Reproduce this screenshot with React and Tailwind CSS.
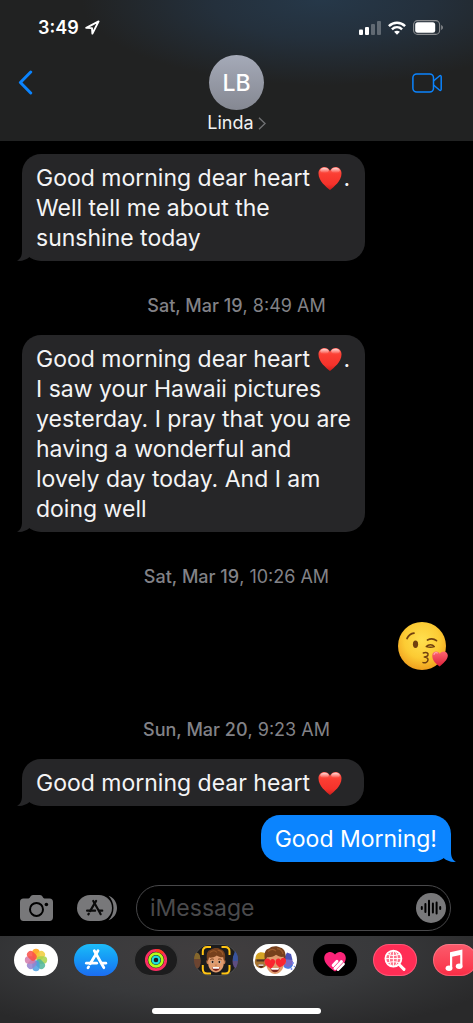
import React, { useState } from 'react';

const HEART_PATH = 'M12 24C8.2 20.6 .5 15 .5 7.4C.5 3.6 3.2 1 6.4 1C8.9 1 11 2.4 12 4.8C13 2.4 15.1 1 17.6 1C20.8 1 23.5 3.6 23.5 7.4C23.5 15 15.8 20.6 12 24Z';

function Heart({ closing }) {
  return (
    <svg role="img" aria-label="red heart" viewBox="0 0 24 25"
         className={`ml-px inline-block h-[25px] w-6 align-[-5px] ${closing ? 'mr-2.5' : 'mr-0.5'}`}>
      <defs>
        <linearGradient id="heart" x1="0" y1="0" x2="0" y2="1">
          <stop offset="0" stopColor="#ff6a60"/>
          <stop offset=".3" stopColor="#fb3e33"/>
          <stop offset=".75" stopColor="#f5322b"/>
          <stop offset="1" stopColor="#c91f1c"/>
        </linearGradient>
        <linearGradient id="shine" x1="0" y1="0" x2="0" y2="1">
          <stop offset="0" stopColor="#fff" stopOpacity=".75"/>
          <stop offset="1" stopColor="#fff" stopOpacity="0"/>
        </linearGradient>
      </defs>
      <path d={HEART_PATH} fill="url(#heart)"/>
      <ellipse cx="6.5" cy="4.3" rx="4.2" ry="2.6" fill="url(#shine)"/>
      <ellipse cx="17.5" cy="4.3" rx="4.2" ry="2.6" fill="url(#shine)"/>
    </svg>
  );
}

function KissEmoji() {
  return (
    <svg role="img" aria-label="face blowing a kiss" viewBox="0 0 50 48" className="h-12 w-[50px]">
      <defs>
        <radialGradient id="face" cx=".5" cy=".38" r=".62">
          <stop offset="0" stopColor="#ffe04f"/>
          <stop offset=".6" stopColor="#fccb34"/>
          <stop offset="1" stopColor="#f0a01e"/>
        </radialGradient>
        <linearGradient id="kiss" x1="0" y1="0" x2="0" y2="1">
          <stop offset="0" stopColor="#ff6672"/>
          <stop offset="1" stopColor="#dc2038"/>
        </linearGradient>
      </defs>
      <circle cx="24" cy="24" r="24" fill="url(#face)"/>
      <g fill="none" stroke="#71400f" strokeLinecap="round" strokeLinejoin="round">
        <path d="M9 16.5C10.5 13.5 13 11.6 16 11.2" strokeWidth="1.7"/>
        <path d="M29.5 18C32.5 16.3 36 16.6 38.5 18.6" strokeWidth="1.7"/>
        <path d="M28.3 24.6C30.5 22 34.5 22 36.3 24.6C34 25.4 31 25.4 28.3 24.6Z" strokeWidth="1.5"/>
        <path d="M25.3 31C28 29.8 30.6 31 30 33C29.6 34.3 28 34.8 26.3 34.9C28.6 35.2 30.2 36.2 30 37.9C29.7 40.3 27.5 41.4 25 40.6" strokeWidth="1.5"/>
      </g>
      <ellipse cx="17.5" cy="22.3" rx="2.6" ry="3.7" fill="#71400f"/>
      <path d="M41.6 44.5C38.5 42 33.8 38.6 34.3 33C34.7 29.4 39.3 28 41.8 31.7C44.5 28 49.5 29.4 49.8 33.2C50 37.8 44.6 41.8 41.6 44.5Z" fill="url(#kiss)"/>
      <path d="M36 32.5C36.4 30.8 38 30.2 39.4 30.9" stroke="#ffa6ab" strokeWidth="1.1" strokeLinecap="round" fill="none"/>
    </svg>
  );
}

function Bubble({ mine, children }) {
  return (
    <div className={`relative max-w-[343px] rounded-[19px] pl-[14px] pt-[9px] pb-2 text-[23px] leading-[30px]
      ${mine ? 'self-end mr-[22px] pr-[14px] bg-[#0b84fe] text-white' : 'self-start ml-[22px] pr-3 bg-[#262628] text-[#f4f4f5]'}`}>
      <svg aria-hidden="true" viewBox="0 0 24 20"
           className={`absolute bottom-0 h-5 w-6 ${mine ? '-right-[5px] -scale-x-100 fill-[#0b84fe]' : '-left-[5px] fill-[#262628]'}`}>
        <path d="M5 0V10C5 15 3.6 17.8 0 19.8C5 20.4 9 18.8 12.5 16L24 19V0Z"/>
      </svg>
      <p className="relative">{children}</p>
    </div>
  );
}

function Stamp({ day, time }) {
  return (
    <div className="mt-[33px] mb-[17px] text-center text-lg leading-6 text-[#828287]">
      <span className="font-medium">{day}</span>, {time}
    </div>
  );
}

function StatusBar() {
  return (
    <div className="flex h-[55px] items-center justify-between pl-[38px] pr-[30px] text-white">
      <div className="flex items-center gap-[6px]">
        <span className="text-lg font-semibold">3:49</span>
        <svg viewBox="0 0 15 15" className="size-[15px]" fill="none" stroke="currentColor" strokeWidth="1.9" strokeLinejoin="round">
          <path d="M1.2 7.8L13.6 1.4L7.4 13.6L7 8.1Z"/>
        </svg>
      </div>
      <div className="flex items-center gap-[7px]">
        <svg viewBox="0 0 22 14" className="h-[14px] w-[22px]" fill="currentColor">
          <rect y="8.5" width="4" height="5.5" rx="1"/>
          <rect x="6" y="6" width="4" height="8" rx="1"/>
          <rect x="12" y="3" width="4" height="11" rx="1" opacity=".28"/>
          <rect x="18" width="4" height="14" rx="1" opacity=".28"/>
        </svg>
        <svg viewBox="0 0 18 14" className="h-[14px] w-[18px]" fill="none" stroke="currentColor" strokeWidth="2.5">
          <path d="M.9 5.1C5.6 .6 12.4 .6 17.1 5.1"/>
          <path d="M3.9 8.4C6.9 5.6 11.1 5.6 14.1 8.4"/>
          <path d="M9 13.7L6.1 10.8C7.8 9.4 10.2 9.4 11.9 10.8Z" fill="currentColor" stroke="none"/>
        </svg>
        <svg viewBox="0 0 30 15" className="h-[15px] w-[30px]">
          <rect x=".6" y=".6" width="26" height="13.8" rx="4" fill="none" stroke="#8b8d90" strokeWidth="1.1"/>
          <rect x="2.2" y="2.2" width="20" height="10.6" rx="2.5" fill="#fff"/>
          <path d="M28.2 5V10C29.3 9.5 29.9 8.6 29.9 7.5S29.3 5.5 28.2 5Z" fill="#8b8d90"/>
        </svg>
      </div>
    </div>
  );
}

function Header() {
  return (
    <header className="bg-[#212222] bg-[radial-gradient(ellipse_240px_85px_at_68%_0%,#263849_0%,#24303c_45%,transparent_100%)]">
      <StatusBar/>
      <nav className="grid grid-cols-3 items-start pb-[5px]">
        <button aria-label="Back" className="flex h-[55px] items-center justify-self-start pl-[18px] text-[#0b84fe]">
          <svg viewBox="0 0 15 25" className="h-[25px] w-[15px]" fill="none" stroke="currentColor" strokeWidth="3" strokeLinecap="round" strokeLinejoin="round">
            <path d="M12.7 2L2.4 12.5L12.7 23"/>
          </svg>
        </button>
        <button className="flex flex-col items-center justify-self-center">
          <span className="flex size-[55px] items-center justify-center rounded-full bg-linear-to-b from-[#a5aab8] to-[#858892] pt-0.5 text-[23px] font-medium text-white">LB</span>
          <span className="flex items-center gap-1 text-lg leading-[26px] text-[#f1f1f1]">
            Linda
            <svg viewBox="0 0 8 13" className="h-[13px] w-2" fill="none" stroke="#707173" strokeWidth="1.4">
              <path d="M1 .8L7 6.5L1 12.2"/>
            </svg>
          </span>
        </button>
        <button aria-label="Video call" className="flex h-[55px] items-center justify-self-end pr-[31px] text-[#0b84fe]">
          <svg viewBox="0 0 30 20" className="h-5 w-[30px]" fill="none" stroke="currentColor" strokeWidth="1.5" strokeLinejoin="round">
            <rect x=".9" y=".9" width="20.6" height="18.2" rx="3.8"/>
            <path d="M21.5 8L27.4 3C28.4 2.3 29.2 2.6 29.2 3.7V16.3C29.2 17.4 28.4 17.7 27.4 17L21.5 12"/>
          </svg>
        </button>
      </nav>
    </header>
  );
}

function AppStoreGlyph() {
  return (
    <g fill="none" stroke="currentColor" strokeWidth="2.8" strokeLinecap="round">
      <path d="M9.3 1.2L16.6 14.2L18.8 18.2"/>
      <path d="M13 1.2L5.2 14.2"/>
      <path d="M3.6 17.4L3 18.4"/>
      <path d="M1.4 13.7H11.7"/>
      <path d="M17.2 13.7H20.8"/>
    </g>
  );
}

function Composer() {
  const [text, setText] = useState('');
  return (
    <form className="mt-auto flex items-center pb-[5px] pl-5 pr-[22px] text-[#78787a]" onSubmit={e => e.preventDefault()}>
      <button type="button" aria-label="Camera" className="mr-6">
        <svg viewBox="0 0 33 26" className="h-[26px] w-[33px]">
          <path d="M3.5 3.5H8.5C10 3.5 10.5 0 13 0H20C22.5 0 23 3.5 24.5 3.5H29.5C31.8 3.5 33 4.8 33 7V22.3C33 24.7 31.8 26 29.5 26H3.5C1.2 26 0 24.7 0 22.3V7C0 4.8 1.2 3.5 3.5 3.5Z" fill="currentColor"/>
          <circle cx="16.5" cy="14.4" r="6.5" fill="none" stroke="#000" strokeWidth="2"/>
          <circle cx="26.4" cy="9.5" r="1.8" fill="#000"/>
        </svg>
      </button>
      <button type="button" aria-label="Apps" className="mr-[19px]">
        <svg viewBox="0 0 40 26" className="h-[26px] w-10">
          <path d="M31.5 .8C36.5 2.5 40 7.2 40 13S36.5 23.5 31.5 25.2C34.5 22 36.5 18 36.5 13S34.5 4 31.5 .8Z" fill="currentColor"/>
          <rect width="35" height="26" rx="13" fill="currentColor"/>
          <g transform="translate(9 5) scale(.78)" className="text-[#0b0b0b]"><AppStoreGlyph/></g>
        </svg>
      </button>
      <div className="flex h-[46px] min-w-0 flex-1 items-center rounded-full border border-[#48484a] pl-[13px] pr-1">
        <input aria-label="iMessage" placeholder="iMessage" value={text} onChange={e => setText(e.target.value)}
               className="min-w-0 flex-1 bg-transparent text-[23px] text-white outline-none placeholder:text-[#4a4a4c]"/>
        <button type="button" aria-label="Record audio">
          <svg viewBox="0 0 30 30" className="size-[30px]">
            <circle cx="15" cy="15" r="15" fill="currentColor"/>
            <path d="M5.8 14V16M9.4 11V19M13 7.8V22.2M16.9 10.6V19.4M20.6 9.6V20.4M24.2 14V16" stroke="#000" strokeWidth="2" strokeLinecap="round"/>
          </svg>
        </button>
      </div>
    </form>
  );
}

const PETALS = [
  { a: 0, c: '#ff9d0a' }, { a: 45, c: '#f0cc3a' }, { a: 90, c: '#a6d24a' }, { a: 135, c: '#4fb59a' },
  { a: 180, c: '#4b9fe0' }, { a: 225, c: '#9382cf' }, { a: 270, c: '#d17bab' }, { a: 315, c: '#fa4f46' },
];

function PhotosIcon() {
  return PETALS.map(p => (
    <rect key={p.a} x="18.3" y="4.8" width="7.4" height="10.6" rx="3.7" fill={p.c} opacity=".85" transform={`rotate(${p.a} 22 16)`}/>
  ));
}

function FitnessIcon() {
  return (
    <g fill="none" strokeWidth="2.8">
      <circle cx="22" cy="16" r="9.7" stroke="#fa2d62"/>
      <path d="M22 6.3A9.7 9.7 0 0 1 29 9.3" stroke="#ff3a20"/>
      <circle cx="22" cy="16" r="6.4" stroke="#b4f91c"/>
      <circle cx="22" cy="16" r="3.4" stroke="#1de0dc" strokeWidth="2.2"/>
    </g>
  );
}

// the same boy is used by the memoji app and by its sticker pack
function Memoji({ love }) {
  return (
    <g>
      <ellipse cx="12.8" cy="18" rx="1.6" ry="2.6" fill="#c97f53"/>
      <ellipse cx="31.2" cy="18" rx="1.6" ry="2.6" fill="#c97f53"/>
      <path d="M13.2 13C13.2 8 30.8 8 30.8 13V19.5C30.8 25.5 26.5 30 22 30S13.2 25.5 13.2 19.5Z" fill="#e09b6e"/>
      <path d="M12.4 18C10.3 10 12 5 16 4.4C19 1.5 25 1.6 27 3.6C32.3 4.5 33.8 11 31.6 18L30.4 12.8C27.5 13.2 25 12.2 23 10.8C20 13 16.5 13.6 14 13.2Z" fill="#76401c"/>
      <path d="M15 7.5C18 4.8 21 5 23 7.2M24 4.7C27 5 29.5 7 30 10" stroke="#9a5a2b" strokeWidth="1.2" fill="none"/>
      {love ? (
        <g fill="#fa2630">
          <path d="M18.5 24.5C15 23.5 11.2 20.5 11.6 17C12 14 16 13.8 17.3 16.4C19.3 13.6 22.6 15.4 22.1 18.3C21.7 20.8 19.8 22.8 18.5 24.5Z"/>
          <path d="M26.5 23.5C24.3 21.8 22.3 19.8 22.6 17.3C23 14.4 26 13.6 27.5 16C28.6 13 32.4 13 33 16C33.5 19.2 30 22.3 26.5 23.5Z"/>
        </g>
      ) : (
        <g>
          <path d="M15.6 15.5C16.8 14.5 18.6 14.5 19.6 15.2M24.4 15.2C25.5 14.5 27.3 14.5 28.4 15.5" stroke="#673616" strokeWidth="1" fill="none"/>
          <ellipse cx="18" cy="18.2" rx="1.7" ry="1.5" fill="#fff"/>
          <ellipse cx="26" cy="18.2" rx="1.7" ry="1.5" fill="#fff"/>
          <circle cx="18.1" cy="18.2" r="1.3" fill="#33190d"/>
          <circle cx="25.9" cy="18.2" r="1.3" fill="#33190d"/>
          <path d="M20.7 21.4C21.6 22 22.4 22 23.3 21.4" stroke="#aa643d" strokeWidth=".9" fill="none"/>
        </g>
      )}
      <path d="M17.5 24H26.5C26 27 24.2 28.3 22 28.3S18 27 17.5 24Z" fill="#7d231c"/>
      <path d="M18 24H26L25.4 25.8H18.6Z" fill="#fff"/>
    </g>
  );
}

function MemojiIcon() {
  return (
    <g>
      <ellipse cx="3" cy="17" rx="3.8" ry="7.5" fill="#6c4430"/>
      <path d="M0 14C0 8 4.4 7 6 12V15H0Z" fill="#84662c"/>
      <ellipse cx="42.5" cy="17" rx="4" ry="7.5" fill="#5d4d80"/>
      <path d="M39 13L41 7L44 8V17H39Z" fill="#38549c"/>
      <g transform="translate(2.6 2) scale(.88)"><Memoji/></g>
      <path d="M8.8 11V7.5Q8.8 3 13.3 3H17M27.5 3H31Q35.5 3 35.5 7.5V11M8.8 21V25Q8.8 29.5 13.3 29.5H17M27.5 29.5H31Q35.5 29.5 35.5 25V21" fill="none" stroke="#ffc414" strokeWidth="2"/>
    </g>
  );
}

function StickersIcon() {
  return (
    <g>
      <circle cx="8" cy="18" r="6.2" fill="#a87532"/>
      <path d="M2.5 14C3 9 7 7 12 9V15H2.5Z" fill="#d5a324"/>
      <path d="M3.5 16.5H12" stroke="#4c321e" strokeWidth="2.2"/>
      <path d="M5 20.5H11C10.5 25 6 25 5 20.5Z" fill="#532415"/>
      <path d="M5.4 20.6H10.6V21.8H5.4Z" fill="#fff"/>
      <circle cx="35" cy="19" r="5.2" fill="#7a68c4"/>
      <path d="M30.5 15L34 8.5L38 10L39.5 16Z" fill="#4a52b4"/>
      <path d="M31 22C34 25 38 24 39 21" stroke="#4d7de0" strokeWidth="1.8" fill="none"/>
      <g fill="#7b8cf0"><circle cx="40" cy="19" r="1"/><circle cx="41.4" cy="22.5" r=".8"/><circle cx="38.5" cy="25" r=".9"/></g>
      <Memoji love/>
    </g>
  );
}

function TouchIcon() {
  return (
    <g>
      <path d="M22 27.5C17 24 11.2 19.6 11.2 14C11.2 8 18.8 5.8 22 10.6C25.2 5.8 32.8 8 32.8 14C32.8 19.6 27 24 22 27.5Z" fill="#fb2478"/>
      <g stroke="#fff" strokeLinecap="round" strokeWidth="3">
        <path d="M20.2 21.4L24 17.4"/>
        <path d="M22 24.4L28.4 17.6"/>
        <path d="M25 25.4L30.4 20"/>
      </g>
      <path d="M20.6 23.4L26.6 17M23.6 25.4L30 18.8" stroke="#fb2478" strokeWidth=".6"/>
    </g>
  );
}

function ImagesIcon() {
  return (
    <g fill="none" stroke="#fff" strokeLinecap="round">
      <circle cx="20.4" cy="14.6" r="8" fill="#ff6f87" strokeWidth="1.8"/>
      <path d="M20.4 6.6V22.6M12.4 14.6H28.4M14 10.2C18 12 23 12 26.8 10.2M14 19C18 17.3 23 17.3 26.8 19" strokeWidth="1"/>
      <ellipse cx="20.4" cy="14.6" rx="4" ry="8" strokeWidth="1"/>
      <path d="M26.4 20.8L31 25.4" strokeWidth="3"/>
    </g>
  );
}

function MusicIcon() {
  return (
    <g fill="#fff">
      <path d="M17 8.2L29.4 5.6V21.6H27.2V11L19.2 12.7V24H17Z"/>
      <ellipse cx="16" cy="24.3" rx="3.4" ry="2.7"/>
      <ellipse cx="26.2" cy="22.2" rx="3.4" ry="2.7"/>
    </g>
  );
}

const APPS = [
  { label: 'Photos',         cls: 'bg-white',                                     icon: <PhotosIcon/> },
  { label: 'App Store',      cls: 'bg-linear-to-b from-[#1ebcf8] to-[#1d6cf0]',   icon: <g transform="translate(11 5.5)" className="text-white"><AppStoreGlyph/></g> },
  { label: 'Fitness',        cls: 'bg-[#1c1c1d] ring-1 ring-inset ring-white/15', icon: <FitnessIcon/> },
  { label: 'Memoji',         cls: 'bg-[#1c1c1d] ring-1 ring-inset ring-white/20', icon: <MemojiIcon/> },
  { label: 'Stickers',       cls: 'bg-white',                                     icon: <StickersIcon/> },
  { label: 'Digital Touch',  cls: 'bg-black',                                     icon: <TouchIcon/> },
  { label: '#images',        cls: 'bg-[#ff2d55] ring-1 ring-inset ring-white/20', icon: <ImagesIcon/> },
  { label: 'Music',          cls: 'bg-linear-to-b from-[#fb5a6c] to-[#fa2a45] ring-1 ring-inset ring-white/20', icon: <MusicIcon/> },
];

function AppTray() {
  return (
    <footer className="overflow-hidden bg-[#29292a] bg-[radial-gradient(ellipse_at_45%_20%,#413e3f_0%,#38393b_45%,#29292a_85%)] pt-2 pb-[9px]">
      <div className="-mr-1 mb-8 flex justify-between pl-[14px]">
        {APPS.map(a => (
          <button key={a.label} aria-label={a.label} className={`h-8 w-11 shrink-0 overflow-hidden rounded-full ${a.cls}`}>
            <svg viewBox="0 0 44 32" className="h-8 w-11">{a.icon}</svg>
          </button>
        ))}
      </div>
      <div className="mx-auto h-[6px] w-[169px] rounded-full bg-white"/>
    </footer>
  );
}

export default function App() {
  return (
    <div className="flex min-h-screen flex-col bg-black font-['Inter',sans-serif]">
      <Header/>
      <main className="flex flex-col pt-[13px]">
        <Bubble>Good morning dear heart <Heart/>. Well tell me about the sunshine today</Bubble>
        <Stamp day="Sat, Mar 19" time="8:49 AM"/>
        <Bubble>Good morning dear heart <Heart/>. I saw your Hawaii pictures yesterday. I pray that you are having a wonderful and lovely day today. And I am doing well</Bubble>
        <Stamp day="Sat, Mar 19" time="10:26 AM"/>
        <div className="self-end pt-4 pr-[25px] pb-[15px]">
          <KissEmoji/>
        </div>
        <Stamp day="Sun, Mar 20" time="9:23 AM"/>
        <Bubble>Good morning dear heart <Heart closing/></Bubble>
        <div className="mt-[9px] flex flex-col">
          <Bubble mine>Good Morning!</Bubble>
        </div>
      </main>
      <Composer/>
      <AppTray/>
    </div>
  );
}
